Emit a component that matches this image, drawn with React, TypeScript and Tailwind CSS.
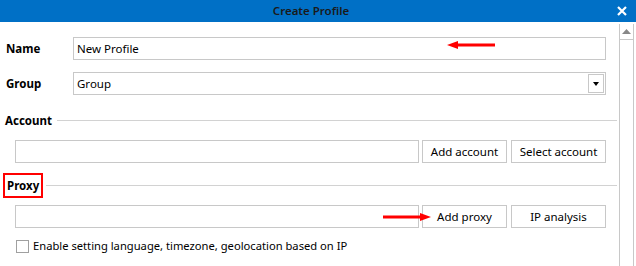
import { FC, ReactNode } from 'react';

const font = { fontFamily: '"Noto Sans", "Open Sans", sans-serif' };

const Input: FC<{ value?: string; className?: string }> = ({ value, className }) => (
  <div className={`h-[23px] border border-[#c8c8c8] bg-white flex items-center pl-[3px] text-[11.5px] text-black ${className ?? ''}`}>
    {value}
  </div>
);

const Btn: FC<{ children: ReactNode; className?: string }> = ({ children, className }) => (
  <div className={`h-[23px] border border-[#c8c8c8] bg-white flex items-center justify-center text-[11.5px] text-black ${className ?? ''}`}>
    {children}
  </div>
);

const Arrow: FC<{ dir: 'left' | 'right'; className: string }> = ({ dir, className }) => (
  <svg className={`absolute ${className}`} width="48" height="8" viewBox="0 0 48 8">
    {dir === 'left' ? (
      <>
        <path d="M0 4 L11 0 L11 8 Z" fill="#f00" />
        <rect x="10" y="2.5" width="38" height="3" fill="#f00" />
      </>
    ) : (
      <>
        <rect x="0" y="2.5" width="38" height="3" fill="#f00" />
        <path d="M48 4 L37 0 L37 8 Z" fill="#f00" />
      </>
    )}
  </svg>
);

export default function App() {
  return (
    <div className="relative w-[636px] h-[266px] overflow-hidden bg-white" style={font}>
      <div className="relative h-[22px] bg-[#0070c6] flex items-center justify-center">
        <span className="ml-[-14px] text-[11.5px] font-semibold text-[#1a1a1a]">Create Profile</span>
        <svg className="absolute left-[617px] top-[6px]" width="10" height="10" viewBox="0 0 10 10">
          <path d="M1 1 L9 9 M9 1 L1 9" stroke="#fff" strokeWidth="2.2" />
        </svg>
      </div>

      <div className="flex h-[244px]">
        <div className="flex-1 flex flex-col pt-[15px] pr-[13px]">
          <div className="flex items-center">
            <span className="w-[73px] pl-[6px] text-[11.5px] font-bold text-black">Name</span>
            <Input value="New Profile" className="flex-1" />
          </div>

          <div className="flex items-center mt-[12px]">
            <span className="w-[73px] pl-[6px] text-[11.5px] font-bold text-black">Group</span>
            <div className="flex-1 h-[23px] border border-[#c8c8c8] bg-white flex items-center pl-[3px] pr-[1px] text-[11.5px] text-black">
              <span className="flex-1">Group</span>
              <div className="w-[16px] h-[19px] border border-[#c8c8c8] flex items-center justify-center">
                <svg width="6" height="4" viewBox="0 0 6 4">
                  <path d="M0 0 H6 L3 4 Z" fill="#000" />
                </svg>
              </div>
            </div>
          </div>

          <div className="flex items-center mt-[17px] mr-[-11px]">
            <span className="pl-[5px] pr-[5px] text-[11.5px] font-bold text-black">Account</span>
            <div className="flex-1 h-px bg-[#d2d2d2]" />
          </div>

          <div className="flex items-center gap-[3px] mt-[11px] pl-[15px]">
            <Input className="flex-1" />
            <Btn className="w-[85px]">Add account</Btn>
            <Btn className="w-[95px] ml-[1px]">Select account</Btn>
          </div>

          <div className="flex items-center mt-[10px] mr-[-11px]">
            <span className="ml-[3px] px-[2px] h-[25px] flex items-center border-2 border-[#f00] text-[11.5px] font-bold text-black">Proxy</span>
            <div className="flex-1 h-px bg-[#d2d2d2] ml-[3px]" />
          </div>

          <div className="flex items-center gap-[3px] mt-[7px] pl-[15px]">
            <Input className="flex-1" />
            <Btn className="w-[85px]">Add proxy</Btn>
            <Btn className="w-[95px] ml-[1px]">IP analysis</Btn>
          </div>

          <div className="flex items-center mt-[10px] pl-[16px]">
            <div className="w-[13px] h-[13px] border border-[#a0a0a0] bg-white" />
            <span className="ml-[4px] text-[11.2px] text-black">Enable setting language, timezone, geolocation based on IP</span>
          </div>
        </div>

        <div className="w-[15px] mr-[2px] mt-[2px] border-x border-[#c8c8c8] flex flex-col">
          <div className="h-[16px] border-b border-[#c8c8c8] flex items-center justify-center">
            <svg width="9" height="5" viewBox="0 0 9 5">
              <path d="M0 5 L4.5 0 L9 5 Z" fill="#888" />
            </svg>
          </div>
        </div>
      </div>

      <Arrow dir="left" className="left-[447px] top-[41px]" />
      <Arrow dir="right" className="left-[383px] top-[213px]" />
    </div>
  );
}
